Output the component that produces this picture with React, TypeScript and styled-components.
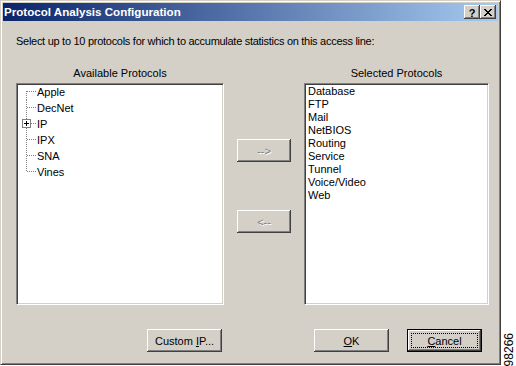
import React from "react";
import styled, { createGlobalStyle } from "styled-components";

const GlobalStyle = createGlobalStyle`
  body {
    margin: 0;
    background: #fff;
    font-family: "Liberation Sans", Arial, sans-serif;
  }
`;

const Page = styled.div`
  display: flex;
  width: 516px;
  height: 366px;
  overflow: hidden;
`;

const Window = styled.div`
  box-sizing: border-box;
  width: 501px;
  height: 365px;
  padding: 2px;
  display: flex;
  flex-direction: column;
  background: #d4d0c8;
  border: 1px solid;
  border-color: #d4d0c8 #404040 #404040 #d4d0c8;
  box-shadow: inset 1px 1px #fff, inset -1px -1px #808080;
  font-size: 11px;
  color: #000;
`;

const TitleBar = styled.div`
  height: 18px;
  display: flex;
  align-items: center;
  padding: 0 2px 0 1px;
  background: linear-gradient(to right, #0a246a, #a6caf0);
`;

const Title = styled.span`
  flex: 1;
  color: #fff;
  font-weight: bold;
  font-size: 11.6px;
  line-height: 18px;
`;

const bevel = `
  box-shadow: inset -1px -1px #404040, inset 1px 1px #fff,
    inset -2px -2px #808080, inset 2px 2px #d4d0c8;
`;

const CaptionButton = styled.div`
  box-sizing: border-box;
  width: 16px;
  height: 14px;
  display: flex;
  align-items: center;
  justify-content: center;
  background: #d4d0c8;
  ${bevel}
  font-weight: bold;
  font-size: 11px;
  line-height: 14px;
  padding-top: 1px;
`;

const Body = styled.div`
  flex: 1;
  display: flex;
  flex-direction: column;
  padding: 14px 0 0 13px;
`;

const Prompt = styled.div`
  line-height: 13px;
  letter-spacing: -0.28px;
`;

const Columns = styled.div`
  display: grid;
  grid-template-columns: 208px 80px 185px;
  margin-top: 19px;
`;

const Column = styled.div`
  display: flex;
  flex-direction: column;
`;

const ColumnLabel = styled.div`
  text-align: center;
  line-height: 13px;
  margin-bottom: 3px;
`;

const ListBox = styled.div<{ $pad?: number }>`
  box-sizing: border-box;
  height: 222px;
  background: #fff;
  border: 1px solid;
  border-color: #808080 #fff #fff #808080;
  box-shadow: inset 1px 1px #404040, inset -1px -1px #d4d0c8;
  padding: ${(p) => p.$pad ?? 1}px 1px;
  overflow: hidden;
`;

const TreeRow = styled.div`
  display: flex;
  align-items: center;
  height: 16px;
  line-height: 16px;
`;

const ListRow = styled.div`
  height: 13px;
  line-height: 13px;
  padding-left: 2px;
`;

const MoveButtons = styled.div`
  display: flex;
  flex-direction: column;
  align-items: center;
  padding-top: 72px;
`;

const Button = styled.div<{ $disabled?: boolean; $default?: boolean; $gap?: number }>`
  position: relative;
  box-sizing: border-box;
  width: 75px;
  height: 23px;
  display: flex;
  align-items: center;
  justify-content: center;
  background: #d4d0c8;
  ${bevel}
  margin-left: ${(p) => p.$gap ?? 0}px;
  color: ${(p) => (p.$disabled ? "#808080" : "#000")};
  text-shadow: ${(p) => (p.$disabled ? "1px 1px #fff" : "none")};
  ${(p) =>
    p.$default &&
    `
    border: 1px solid #000;
    &::after {
      content: "";
      position: absolute;
      inset: 3px;
      border: 1px dotted #000;
    }
  `}
`;

const ArrowButton = styled(Button)<{ $top: number }>`
  width: 54px;
  margin-top: ${(p) => p.$top}px;
`;

const Mnemonic = styled.span`
  text-decoration: underline;
`;

const Footer = styled.div`
  display: flex;
  margin-top: 24px;
`;

const FigureStrip = styled.div`
  flex: 1;
  display: flex;
  flex-direction: column;
  justify-content: flex-end;
  align-items: center;
`;

const FigureNumber = styled.span`
  writing-mode: vertical-rl;
  transform: rotate(180deg);
  font-size: 12px;
  line-height: 12px;
`;

type Pos = "first" | "middle" | "last";

const Connector = ({ pos, expandable }: { pos: Pos; expandable?: boolean }) => (
  <svg width="19" height="16" shapeRendering="crispEdges">
    <line
      x1="8.5"
      y1={pos === "first" ? 7 : 0}
      x2="8.5"
      y2={pos === "last" ? 8 : 16}
      stroke="#808080"
      strokeDasharray="1 1"
    />
    <line x1={expandable ? 13 : 9} y1="7.5" x2="18" y2="7.5" stroke="#808080" strokeDasharray="1 1" />
    {expandable && (
      <>
        <rect x="4.5" y="3.5" width="8" height="8" fill="#fff" stroke="#808080" />
        <path d="M6 7.5h5M8.5 5v5" stroke="#000" />
      </>
    )}
  </svg>
);

const CloseGlyph = () => (
  <svg width="8" height="7" shapeRendering="crispEdges">
    <path d="M0 0h2v1H0zM6 0h2v1H6zM1 1h2v1H1zM5 1h2v1H5zM2 2h4v1H2zM3 3h2v1H3zM2 4h4v1H2zM1 5h2v1H1zM5 5h2v1H5zM0 6h2v1H0zM6 6h2v1H6z" fill="#000" />
  </svg>
);

const available = [
  { name: "Apple" },
  { name: "DecNet" },
  { name: "IP", expandable: true },
  { name: "IPX" },
  { name: "SNA" },
  { name: "Vines" },
];

const selected = ["Database", "FTP", "Mail", "NetBIOS", "Routing", "Service", "Tunnel", "Voice/Video", "Web"];

const App = () => {
  return (
    <Page>
      <GlobalStyle />
      <Window>
        <TitleBar>
          <Title>Protocol Analysis Configuration</Title>
          <CaptionButton>?</CaptionButton>
          <CaptionButton>
            <CloseGlyph />
          </CaptionButton>
        </TitleBar>
        <Body>
          <Prompt>Select up to 10 protocols for which to accumulate statistics on this access line:</Prompt>
          <Columns>
            <Column>
              <ColumnLabel>Available Protocols</ColumnLabel>
              <ListBox $pad={0}>
                {available.map((item, i) => (
                  <TreeRow key={item.name}>
                    <Connector
                      pos={i === 0 ? "first" : i === available.length - 1 ? "last" : "middle"}
                      expandable={item.expandable}
                    />
                    <span>{item.name}</span>
                  </TreeRow>
                ))}
              </ListBox>
            </Column>
            <MoveButtons>
              <ArrowButton $disabled $top={0}>--&gt;</ArrowButton>
              <ArrowButton $disabled $top={48}>&lt;--</ArrowButton>
            </MoveButtons>
            <Column>
              <ColumnLabel>Selected Protocols</ColumnLabel>
              <ListBox>
                {selected.map((name) => (
                  <ListRow key={name}>{name}</ListRow>
                ))}
              </ListBox>
            </Column>
          </Columns>
          <Footer>
            <Button $gap={131}>
              <span>
                Custom <Mnemonic>I</Mnemonic>P...
              </span>
            </Button>
            <Button $gap={92}>
              <span>
                <Mnemonic>O</Mnemonic>K
              </span>
            </Button>
            <Button $gap={18} $default>
              <span>
                <Mnemonic>C</Mnemonic>ancel
              </span>
            </Button>
          </Footer>
        </Body>
      </Window>
      <FigureStrip>
        <FigureNumber>98266</FigureNumber>
      </FigureStrip>
    </Page>
  );
};

export default App;
